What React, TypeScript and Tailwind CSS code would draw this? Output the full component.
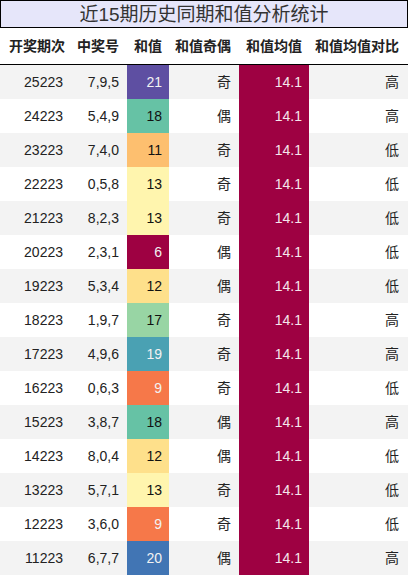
import React from "react";

type Row = { q: string; n: string; s: number; bg: string; light: boolean; oe: string; cmp: string };

const rows: Row[] = [
  { q: "25223", n: "7,9,5", s: 21, bg: "bg-[#5e4fa2]", light: true, oe: "奇", cmp: "高" },
  { q: "24223", n: "5,4,9", s: 18, bg: "bg-[#66c2a5]", light: false, oe: "偶", cmp: "高" },
  { q: "23223", n: "7,4,0", s: 11, bg: "bg-[#fdbf6f]", light: false, oe: "奇", cmp: "低" },
  { q: "22223", n: "0,5,8", s: 13, bg: "bg-[#fff5ae]", light: false, oe: "奇", cmp: "低" },
  { q: "21223", n: "8,2,3", s: 13, bg: "bg-[#fff5ae]", light: false, oe: "奇", cmp: "低" },
  { q: "20223", n: "2,3,1", s: 6, bg: "bg-[#9e0142]", light: true, oe: "偶", cmp: "低" },
  { q: "19223", n: "5,3,4", s: 12, bg: "bg-[#fee08b]", light: false, oe: "偶", cmp: "低" },
  { q: "18223", n: "1,9,7", s: 17, bg: "bg-[#98d5a4]", light: false, oe: "奇", cmp: "高" },
  { q: "17223", n: "4,9,6", s: 19, bg: "bg-[#4aa1b3]", light: true, oe: "奇", cmp: "高" },
  { q: "16223", n: "0,6,3", s: 9, bg: "bg-[#f67849]", light: true, oe: "奇", cmp: "低" },
  { q: "15223", n: "3,8,7", s: 18, bg: "bg-[#66c2a5]", light: false, oe: "偶", cmp: "高" },
  { q: "14223", n: "8,0,4", s: 12, bg: "bg-[#fee08b]", light: false, oe: "偶", cmp: "低" },
  { q: "13223", n: "5,7,1", s: 13, bg: "bg-[#fff5ae]", light: false, oe: "奇", cmp: "低" },
  { q: "12223", n: "3,6,0", s: 9, bg: "bg-[#f67849]", light: true, oe: "奇", cmp: "低" },
  { q: "11223", n: "6,7,7", s: 20, bg: "bg-[#4175b4]", light: true, oe: "偶", cmp: "高" },
];

const grid = "grid grid-cols-[70px_57px_42px_70px_70px_1fr]";

export default function App() {
  return (
    <div
      className="w-[408px] h-[576px] overflow-hidden bg-white text-[#222]"
      style={{ fontFamily: '"Liberation Sans", "Noto Sans CJK SC", sans-serif' }}
    >
      <div className="h-[28px] border border-black bg-[#e6e6fa] flex items-center justify-center text-[19px] text-[#333] leading-none">
        近15期历史同期和值分析统计
      </div>
      <div className={`${grid} h-[37px] border-b border-black text-[14px] font-bold items-center text-right`}>
        <div className="pr-[5px]">开奖期次</div>
        <div className="pr-[8px]">中奖号</div>
        <div className="pr-[7px]">和值</div>
        <div className="pr-[8px]">和值奇偶</div>
        <div className="pr-[7px]">和值均值</div>
        <div className="pr-[9px]">和值均值对比</div>
      </div>
      {rows.map((r, i) => (
        <div
          key={r.q}
          className={`${grid} h-[34px] text-[14px] text-right ${i % 2 === 0 ? "bg-[#f3f3f3]" : "bg-white"}`}
        >
          <div className="pr-[7px] flex items-center justify-end">{r.q}</div>
          <div className="pr-[8px] flex items-center justify-end">{r.n}</div>
          <div className={`pr-[7px] flex items-center justify-end ${r.bg} ${r.light ? "text-[#f2f2f2]" : "text-[#111]"}`}>{r.s}</div>
          <div className="pr-[8px] flex items-center justify-end">{r.oe}</div>
          <div className="pr-[7px] flex items-center justify-end bg-[#9e0142] text-[#f5e6ec]">14.1</div>
          <div className="pr-[9px] flex items-center justify-end">{r.cmp}</div>
        </div>
      ))}
    </div>
  );
}
